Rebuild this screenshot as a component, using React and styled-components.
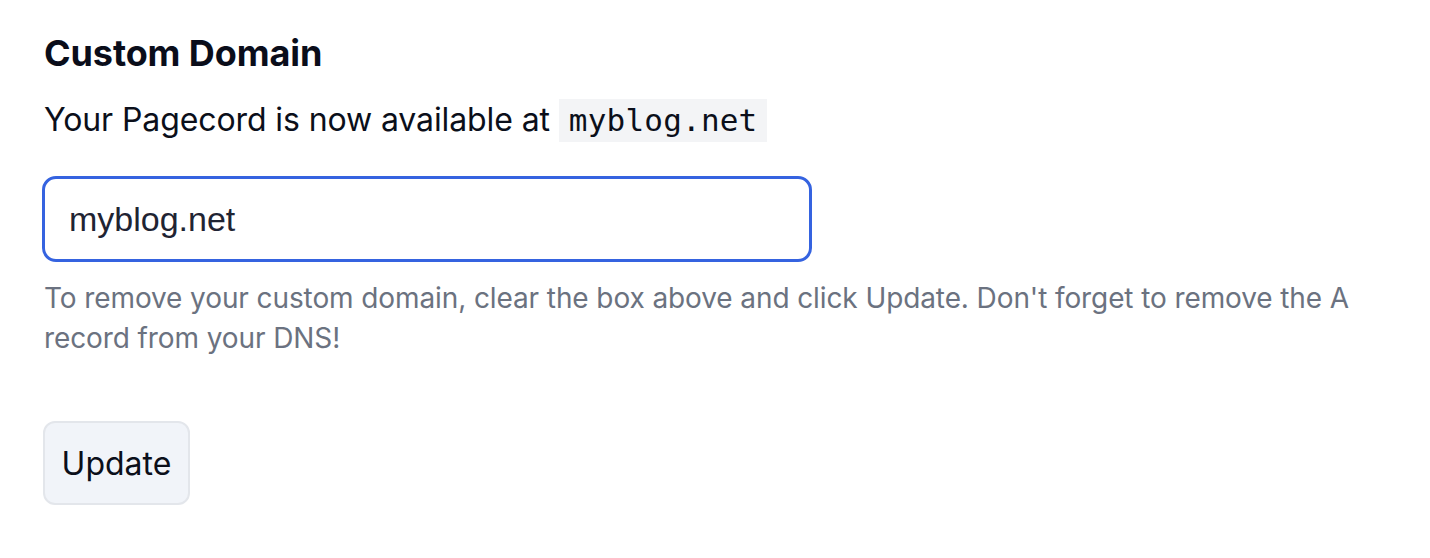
import React from "react";
import styled, { createGlobalStyle } from "styled-components";

const GlobalStyle = createGlobalStyle`
  body {
    margin: 0;
    background: #ffffff;
    font-family: Inter, "Noto Sans", sans-serif;
    color: #0b0f1a;
  }
`;

const Section = styled.section`
  padding: 29px 44px 0 44px;
  width: 1330px;
`;

const Title = styled.h2`
  margin: 0;
  font-size: 36px;
  font-weight: 700;
  line-height: 48px;
  color: #0a0d1a;
  letter-spacing: -0.1px;
`;

const Lead = styled.p`
  margin: 19px 0 0 0;
  font-size: 32px;
  line-height: 48px;
  color: #0b0f1a;
  letter-spacing: -0.1px;
`;

const Code = styled.code`
  font-family: "DejaVu Sans Mono", "Liberation Mono", monospace;
  font-size: 31px;
  letter-spacing: 0.2px;
  background: #f3f4f6;
  padding: 3px 10px 4px;
`;

const Field = styled.input`
  display: block;
  box-sizing: border-box;
  margin: 32px 0 0 -2px;
  width: 770px;
  height: 86px;
  padding: 0 24px;
  border: 3px solid #3563e0;
  border-radius: 14px;
  outline: none;
  font-family: "Liberation Sans", Arial, sans-serif;
  font-size: 34px;
  color: #1f2433;
  background: #fff;
`;

const Hint = styled.p`
  margin: 16px 0 0 0;
  font-size: 28px;
  line-height: 40px;
  color: #6b7280;
  letter-spacing: -0.1px;
`;

const Button = styled.button`
  margin: 63px 0 0 -1px;
  box-sizing: border-box;
  width: 147px;
  height: 84px;
  padding: 0;
  border: 2px solid #e3e6eb;
  border-radius: 12px;
  background: #f1f4f9;
  font-family: Inter, "Noto Sans", sans-serif;
  font-size: 32px;
  color: #0b0f1a;
  cursor: pointer;
`;

export default function App() {
  return (
    <>
      <GlobalStyle />
      <Section>
        <Title>Custom Domain</Title>
        <Lead>
          Your Pagecord is now available at <Code>myblog.net</Code>
        </Lead>
        <Field defaultValue="myblog.net" />
        <Hint>
          To remove your custom domain, clear the box above and click Update.
          Don't forget to remove the A record from your DNS!
        </Hint>
        <Button>Update</Button>
      </Section>
    </>
  );
}
